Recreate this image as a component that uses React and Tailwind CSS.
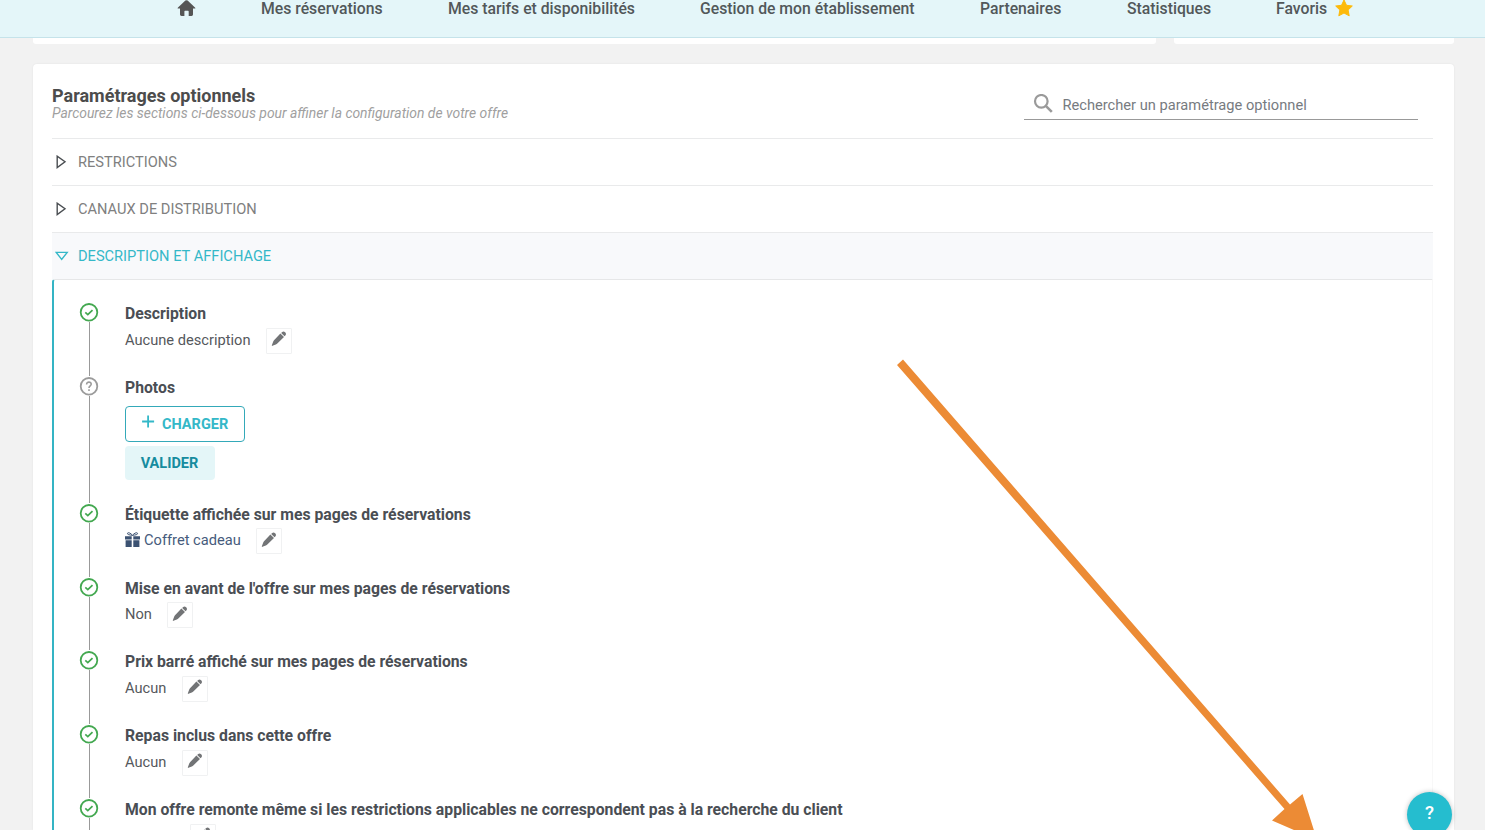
import React from "react";

const NAV = [
  ["Mes réservations", "w-[122px]"],
  ["Mes tarifs et disponibilités", "w-[187px]"],
  ["Gestion de mon établissement", "w-[215px]"],
  ["Partenaires", "w-[82px]"],
  ["Statistiques", "w-[84px]"],
];

function Pencil({ low }) {
  return (
    <span className={"flex h-[26px] w-[26px] shrink-0 items-start justify-center rounded-[1px] border border-[#f0f1f2] text-[#727476] " + (low ? "pt-[3px]" : "pt-[2px]")}>
      <svg width="16" height="16" viewBox="0 0 16 17" fill="currentColor">
        <path d="M9.5 2.6 13.3 6.3 6.2 13.2Q5.2 14.1 3.9 14.6L1 15.8Q.2 16 .4 15.2L1.5 12.2Q1.9 10.8 2.7 9.7Z" />
        <path d="M10.3 2 11.4 1Q13 -.1 14.5 1.3 16 2.9 14.9 4.5L13.9 5.6Z" />
      </svg>
    </span>
  );
}

function Mark({ pending }) {
  return (
    <svg className="block shrink-0" width="20" height="20" viewBox="0 0 20 20" fill="none">
      <circle cx="10" cy="10.3" r="8.3" stroke={pending ? "#9b9b9b" : "#43a850"} strokeWidth="1.8" />
      {pending ? (
        <g stroke="#9b9b9b" strokeWidth="1.6">
          <path d="M7.6 8.4C7.6 5.300 12.4 5.500 12.2 8.300 12.1 9.900 10 9.900 10 11.900" />
          <path d="M10 13.200v1.7" />
        </g>
      ) : (
        <path d="m6.300 10.400 2.500 2.300 4.700-4.600" stroke="#43a850" strokeWidth="1.7" />
      )}
    </svg>
  );
}

function Item({ title, height, pending, children }) {
  return (
    <div className={"flex " + height}>
      <div className="flex w-[20px] flex-col items-center">
        <Mark pending={pending} />
        <div className="ml-[1px] w-px grow bg-[#999]" />
      </div>
      <div className="ml-[26px] pt-[2px]">
        <div className="whitespace-nowrap text-[15.76px] font-bold leading-[20px] text-[#4a4e54]">{title}</div>
        {children}
      </div>
    </div>
  );
}

function Value({ children, pad, low }) {
  return (
    <div className={"flex items-start gap-[15.4px] text-[14.65px] " + pad}>
      <span className="flex items-center leading-[24px]">{children}</span>
      <Pencil low={low} />
    </div>
  );
}

function Section({ label, open }) {
  return (
    <div className={"flex h-[47px] items-center border-t border-[#e9eaeb] pl-[3px] " + (open ? "bg-[#f8f9fb] text-[#34b8c8]" : "text-[#808080]")}>
      <svg width="14" height="14" viewBox="0 0 14 14" fill="none" stroke={open ? "#34b8c8" : "#4a4e52"} strokeWidth="1.4">
        {open ? <path d="M1.2 3.4h11L6.7 10.4Z" /> : <path d="M2.2 1.2v11.3L10 6.8Z" />}
      </svg>
      <span className="ml-[9px] pt-[2px] text-[14.63px]">{label}</span>
    </div>
  );
}

export default function App() {
  return (
    <div className="relative flex h-[830px] w-[1485px] flex-col overflow-hidden bg-[#f2f2f2] font-['Roboto',sans-serif] text-[#55585c]">
      <header className="flex h-[38px] shrink-0 items-start border-b border-[#c5e3ea] bg-[#e4f6f9] pl-[177px] text-[15.75px] font-medium leading-[18px] text-[#52585a]">
        <svg className="mr-[65px]" width="19" height="17" viewBox="0 0 19 17" fill="#555">
          <path d="M8.4.6Q9.5-.3 10.6.6L18 7.4Q19 8.5 17.6 8.6H16V14.6Q16 16 14.6 16H11.7V11.4Q11.7 10.8 11 10.8H8Q7.4 10.8 7.4 11.4V16H4.5Q3 16 3 14.6V8.6H1.4Q0 8.5 1 7.4Z" />
        </svg>
        <nav className="flex gap-[65px]">
          {NAV.map(([label, width]) => (
            <span key={label} className={"whitespace-nowrap " + width}>{label}</span>
          ))}
          <span className="flex gap-[8px]">
            Favoris
            <svg width="18" height="17" viewBox="0 0 18 17" fill="#fdba0b">
              <path d="M9 0 11.5 5.3 17.3 6 13.1 10 14.2 15.8 9 13 3.8 15.8 4.9 10 .7 6 6.5 5.3Z" stroke="#fdba0b" strokeLinejoin="round" />
            </svg>
          </span>
        </nav>
      </header>

      <div className="flex h-[6px] shrink-0 gap-[18px] pl-[33px]">
        <div className="w-[1123px] rounded-b-[3px] bg-white" />
        <div className="w-[280px] rounded-b-[3px] bg-white" />
      </div>

      <main className="ml-[33px] mt-[20px] w-[1421px] grow rounded-t-[4px] bg-white pl-[19px] shadow-[0_0_2px_rgba(0,0,0,0.08)]">
        <div className="flex h-[74px] justify-between pr-[36px]">
          <div className="pt-[23px]">
            <h1 className="text-[18px] font-bold leading-[18px] text-[#4c4c4c]">Paramétrages optionnels</h1>
            <p className="text-[13.9px] italic leading-[16px] text-[#a0a0a0]">Parcourez les sections ci-dessous pour affiner la configuration de votre offre</p>
          </div>
          <div className="mt-[26px] flex h-[30px] w-[394px] items-center border-b border-[#999] pl-[9px]">
            <svg className="mb-[1px]" width="20" height="20" viewBox="0 0 20 20" fill="none" stroke="#9a9a9a" strokeWidth="2.2">
              <circle cx="8.3" cy="7.3" r="6.3" />
              <path d="m12.8 11.9 6 6" strokeWidth="2.6" />
            </svg>
            <span className="ml-[9.5px] pt-[2px] text-[14.65px] text-[#777b7f]">Rechercher un paramétrage optionnel</span>
          </div>
        </div>

        <div className="w-[1381px]">
          <Section label="RESTRICTIONS" />
          <Section label="CANAUX DE DISTRIBUTION" />
          <Section label="DESCRIPTION ET AFFICHAGE" open />
          <div className="h-[551px] rounded-tl-[3px] border-l-2 border-r border-t border-l-[#34b4c4] border-r-[#f8f8f8] border-t-[#e6e7e8] pl-[25px] pt-[22px]">
            <Item title="Description" height="h-[74px]">
              <Value pad="pt-[4px]">Aucune description</Value>
            </Item>
            <Item title="Photos" height="h-[127px]" pending>
              <div className="mt-[8px] flex h-[36px] w-[120px] items-center rounded-[4px] border border-[#34a9b9] pl-[16px] text-[14.5px] font-bold text-[#34b8c8]">
                <svg className="mb-[5px]" width="13" height="13" viewBox="0 0 13 13" stroke="currentColor" strokeWidth="1.8">
                  <path d="M6.100.5v12M.100 6.500h12" />
                </svg>
                <span className="ml-[7px] pt-[1px]">CHARGER</span>
              </div>
              <div className="mt-[4px] flex h-[34px] w-[90px] items-center justify-center rounded-[4px] bg-[#e4f6f8] pr-[1px] pt-[1px] text-[14.5px] font-bold text-[#168c9f]">VALIDER</div>
            </Item>
            <Item title="Étiquette affichée sur mes pages de réservations" height="h-[74px]">
              <Value pad="pt-[3px]" low>
                <svg className="mb-[2px] mr-[4px]" width="15" height="15" viewBox="0 0 15 15" fill="#3c5272">
                  <path d="M0 4.2h6.700v3.400H0ZM8.300 4.200H15v3.400H8.300ZM.6 8.200h6.100V15H.6ZM8.300 8.200h6.100V15H8.300Z" />
                  <path d="M7.500 3.300C5.800 1.200 3-.1 2.500 1.300 2.200 2.700 4.500 3 7.500 3.300 10.500 3 12.800 2.700 12.500 1.300 12-.1 9.200 1.200 7.500 3.300Z" fill="none" stroke="#3c5272" />
                </svg>
                <span className="text-[#465b7c]">Coffret cadeau</span>
              </Value>
            </Item>
            <Item title="Mise en avant de l'offre sur mes pages de réservations" height="h-[73px]">
              <Value pad="pt-[3px]" low>Non</Value>
            </Item>
            <Item title="Prix barré affiché sur mes pages de réservations" height="h-[74px]">
              <Value pad="pt-[4px]">Aucun</Value>
            </Item>
            <Item title="Repas inclus dans cette offre" height="h-[74px]">
              <Value pad="pt-[4px]">Aucun</Value>
            </Item>
            <Item title="Mon offre remonte même si les restrictions applicables ne correspondent pas à la recherche du client" height="h-[74px]">
              <Value pad="pt-[4px]">Aucune</Value>
            </Item>
          </div>
        </div>
      </main>

      <svg className="absolute left-0 top-0" width="1485" height="830" fill="#ec8b35">
        <path d="M903 359.500 897 365 1284.500 809 1272 820.500 1317 840 1302.500 794 1290 804.500Z" />
      </svg>
      <div className="absolute left-[1407px] top-[792px] flex h-[45px] w-[45px] items-center justify-center rounded-full bg-[#25bdcf] pb-[2px] text-[18.5px] font-medium text-white shadow-[0_0_5px_rgba(0,0,0,0.25)]">?</div>
    </div>
  );
}
